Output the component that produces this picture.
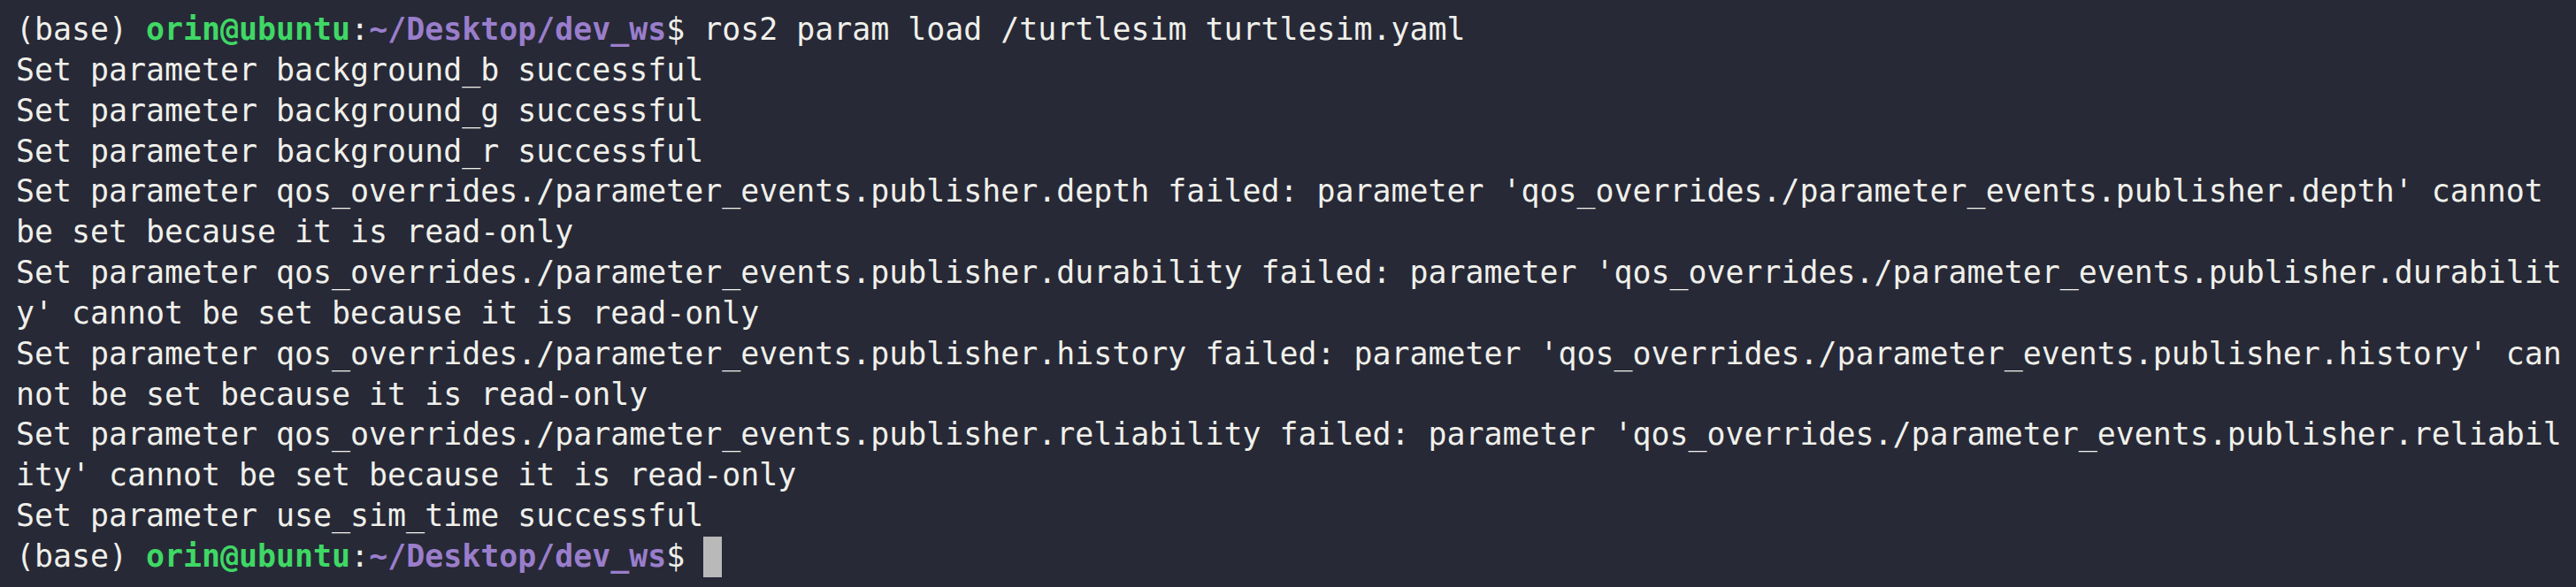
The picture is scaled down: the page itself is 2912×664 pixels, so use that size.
import React from "react";

const lines: string[] = [
  "Set parameter background_b successful",
  "Set parameter background_g successful",
  "Set parameter background_r successful",
  "Set parameter qos_overrides./parameter_events.publisher.depth failed: parameter 'qos_overrides./parameter_events.publisher.depth' cannot",
  "be set because it is read-only",
  "Set parameter qos_overrides./parameter_events.publisher.durability failed: parameter 'qos_overrides./parameter_events.publisher.durabilit",
  "y' cannot be set because it is read-only",
  "Set parameter qos_overrides./parameter_events.publisher.history failed: parameter 'qos_overrides./parameter_events.publisher.history' can",
  "not be set because it is read-only",
  "Set parameter qos_overrides./parameter_events.publisher.reliability failed: parameter 'qos_overrides./parameter_events.publisher.reliabil",
  "ity' cannot be set because it is read-only",
  "Set parameter use_sim_time successful",
];

function Prompt({ children }: { children?: React.ReactNode }) {
  return (
    <div className="whitespace-pre">
      <span>(base) </span>
      <span className="font-bold text-[#3fd865]">orin@ubuntu</span>
      <span>:</span>
      <span className="font-bold text-[#9a7ecb]">~/Desktop/dev_ws</span>
      <span>$ </span>
      {children}
    </div>
  );
}

export default function App() {
  return (
    <div
      className="w-[2912px] h-[664px] overflow-hidden bg-[#272937] text-[#f0f0ea] pl-[18px] pt-[11px] text-[34.9px] leading-[45.85px]"
      style={{ fontFamily: '"DejaVu Sans Mono", monospace' }}
    >
      <Prompt>
        <span>ros2 param load /turtlesim turtlesim.yaml</span>
      </Prompt>
      {lines.map((line, i) => (
        <div key={i} className="whitespace-pre">
          {line}
        </div>
      ))}
      <Prompt>
        <span className="inline-block w-[21px] h-[46px] align-top bg-[#b9b9b9]" />
      </Prompt>
    </div>
  );
}
